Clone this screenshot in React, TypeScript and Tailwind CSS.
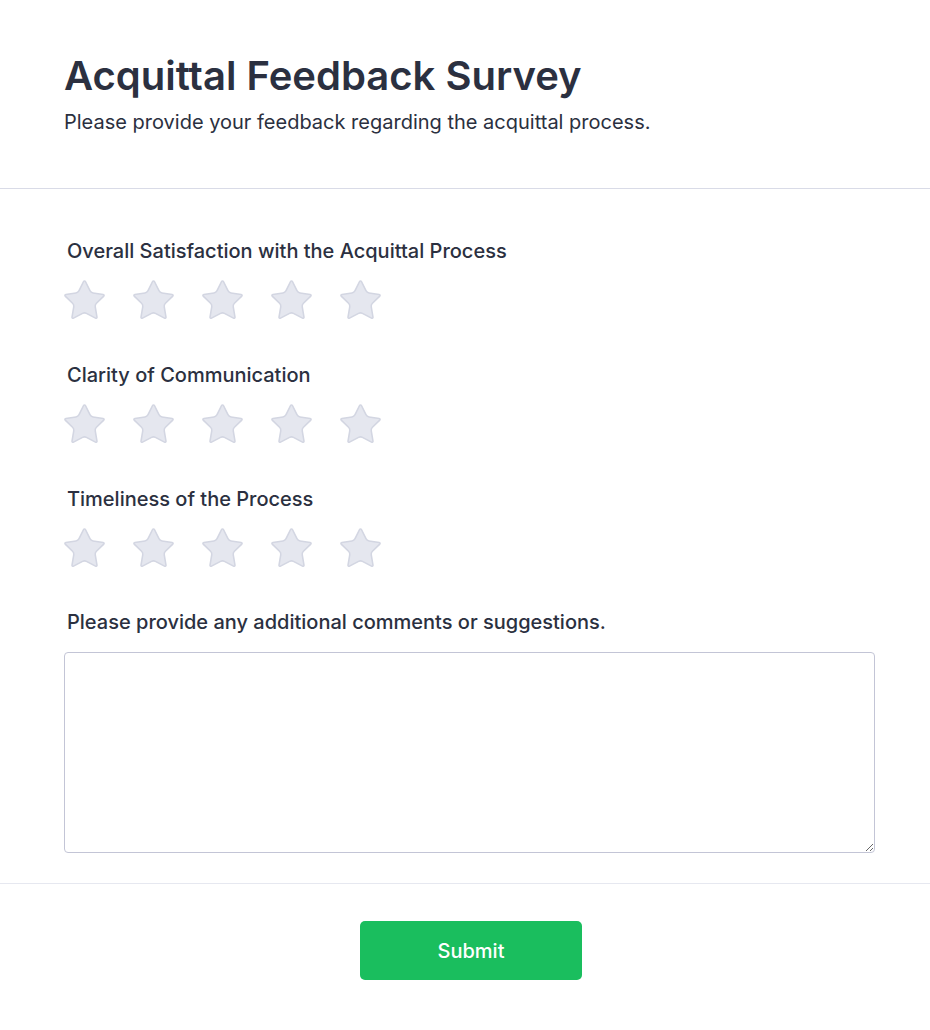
import React from "react";

const Star = () => (
  <svg width="47" height="47" viewBox="0 0 24 24" fill="#e5e7ef" stroke="#d3d6e2" strokeWidth="0.8" strokeLinejoin="round">
    <path d="M11.525 2.295a.53.53 0 0 1 .95 0l2.31 4.679a2.123 2.123 0 0 0 1.595 1.16l5.166.756a.53.53 0 0 1 .294.904l-3.736 3.638a2.123 2.123 0 0 0-.611 1.878l.882 5.14a.53.53 0 0 1-.771.56l-4.618-2.428a2.122 2.122 0 0 0-1.973 0L6.396 21.01a.53.53 0 0 1-.77-.56l.881-5.139a2.122 2.122 0 0 0-.611-1.879L2.16 9.795a.53.53 0 0 1 .294-.906l5.165-.755a2.122 2.122 0 0 0 1.597-1.16z" />
  </svg>
);

const Rating = ({ label }: { label: string }) => (
  <div className="flex flex-col">
    <div className="ml-[3px] text-[20px] leading-[28px] font-medium text-[#2b3040]">{label}</div>
    <div className="flex gap-[22px] mt-[12px] -ml-[3px]">
      {[0, 1, 2, 3, 4].map((i) => (
        <Star key={i} />
      ))}
    </div>
  </div>
);

export default function App() {
  return (
    <div className="min-h-[1030px] bg-white" style={{ fontFamily: "Inter, 'Noto Sans', sans-serif" }}>
      <div className="px-16 pt-[52px] pb-[52px] border-b border-[#d9dbe7]">
        <h1 className="text-[40px] leading-[48px] font-semibold text-[#2b3040]">Acquittal Feedback Survey</h1>
        <p className="mt-[8px] text-[20px] leading-[28px] text-[#2b3040]">Please provide your feedback regarding the acquittal process.</p>
      </div>
      <div className="px-16 pt-[48px] pb-[30px] border-b border-[#e6e8f0]">
        <div className="flex flex-col gap-[37px]">
          <Rating label="Overall Satisfaction with the Acquittal Process" />
          <Rating label="Clarity of Communication" />
          <Rating label="Timeliness of the Process" />
          <div className="flex flex-col -mt-[1px]">
            <div className="ml-[3px] text-[20px] leading-[28px] font-medium text-[#2b3040]">Please provide any additional comments or suggestions.</div>
            <textarea className="mt-[16px] w-[811px] h-[201px] border border-[#c3c5d6] rounded-[4px] outline-none" />
          </div>
        </div>
      </div>
      <div className="flex justify-center pt-[37px] pl-[12px]">
        <button className="w-[222px] h-[59px] rounded-[5px] bg-[#1abe5e] text-white text-[20px] font-medium">Submit</button>
      </div>
    </div>
  );
}
